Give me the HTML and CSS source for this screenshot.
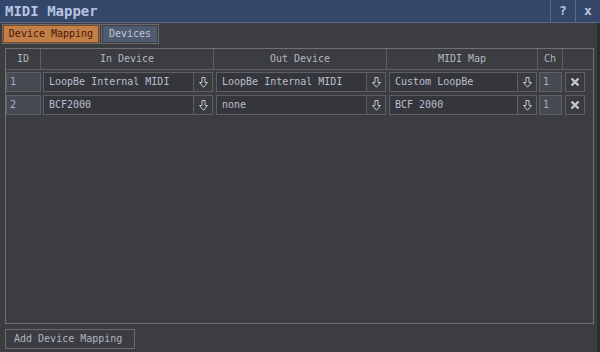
FILE: index.html
```html
<!DOCTYPE html>
<html>
<head>
<meta charset="utf-8">
<link rel="stylesheet" href="styles.css">
</head>
<body>
<div class="window">
  <div class="titlebar">
    <div class="title">MIDI Mapper</div>
    <div class="tbtn">?</div>
    <div class="tbtn">x</div>
  </div>
  <div class="tabs">
    <div class="tab active">Device Mapping</div>
    <div class="tab devices">Devices</div>
  </div>
  <div class="panel">
    <div class="grid head">
      <div class="hc">ID</div>
      <div class="hc">In Device</div>
      <div class="hc">Out Device</div>
      <div class="hc">MIDI Map</div>
      <div class="hc">Ch</div>
      <div class="hc last"></div>
    </div>
    <div class="grid row">
      <div class="cell"><div class="num">1</div></div>
      <div class="cell"><div class="combo"><div class="ctext">LoopBe Internal MIDI</div><div class="cbtn"><svg width="9" height="11" viewBox="0 0 9 11"><path d="M3 0.5H6V5.5H8.5L4.5 10.3L0.5 5.5H3Z" fill="none" stroke="#c3c6ce"/></svg></div></div></div>
      <div class="cell"><div class="combo"><div class="ctext">LoopBe Internal MIDI</div><div class="cbtn"><svg width="9" height="11" viewBox="0 0 9 11"><path d="M3 0.5H6V5.5H8.5L4.5 10.3L0.5 5.5H3Z" fill="none" stroke="#c3c6ce"/></svg></div></div></div>
      <div class="cell"><div class="combo"><div class="ctext">Custom LoopBe</div><div class="cbtn"><svg width="9" height="11" viewBox="0 0 9 11"><path d="M3 0.5H6V5.5H8.5L4.5 10.3L0.5 5.5H3Z" fill="none" stroke="#c3c6ce"/></svg></div></div></div>
      <div class="cell"><div class="num ch">1</div></div>
      <div class="cell xc"><div class="xbtn"><svg width="10" height="10" viewBox="0 0 10 10"><path d="M1.5 1.5L8.5 8.5M8.5 1.5L1.5 8.5" stroke="#c3c6ce" stroke-width="2.4"/></svg></div></div>
    </div>
    <div class="grid row">
      <div class="cell"><div class="num">2</div></div>
      <div class="cell"><div class="combo"><div class="ctext">BCF2000</div><div class="cbtn"><svg width="9" height="11" viewBox="0 0 9 11"><path d="M3 0.5H6V5.5H8.5L4.5 10.3L0.5 5.5H3Z" fill="none" stroke="#c3c6ce"/></svg></div></div></div>
      <div class="cell"><div class="combo"><div class="ctext">none</div><div class="cbtn"><svg width="9" height="11" viewBox="0 0 9 11"><path d="M3 0.5H6V5.5H8.5L4.5 10.3L0.5 5.5H3Z" fill="none" stroke="#c3c6ce"/></svg></div></div></div>
      <div class="cell"><div class="combo"><div class="ctext">BCF 2000</div><div class="cbtn"><svg width="9" height="11" viewBox="0 0 9 11"><path d="M3 0.5H6V5.5H8.5L4.5 10.3L0.5 5.5H3Z" fill="none" stroke="#c3c6ce"/></svg></div></div></div>
      <div class="cell"><div class="num ch">1</div></div>
      <div class="cell xc"><div class="xbtn"><svg width="10" height="10" viewBox="0 0 10 10"><path d="M1.5 1.5L8.5 8.5M8.5 1.5L1.5 8.5" stroke="#c3c6ce" stroke-width="2.4"/></svg></div></div>
    </div>
  </div>
  <div class="footer">
    <div class="addbtn">Add Device Mapping</div>
  </div>
</div>
</body>
</html>
```
FILE: styles.css
```css
html, body {
  margin: 0;
  padding: 0;
  background: #3c3d41;
}
.window {
  width: 600px;
  height: 352px;
  box-sizing: border-box;
  border-right: 3px solid #2c2d30;
  background: #3c3d41;
  font-family: "DejaVu Sans Mono", monospace;
  font-size: 10px;
  color: #b9bfcc;
  display: flex;
  flex-direction: column;
}
.titlebar {
  height: 22px;
  background: #34466a;
  border-bottom: 1px solid #5b6a8a;
  display: flex;
  align-items: stretch;
  margin-right: -3px;
}
.title {
  flex: 1;
  padding-left: 5px;
  font-weight: bold;
  font-size: 14px;
  line-height: 22px;
  color: #b8c4e4;
}
.tbtn {
  width: 24px;
  border-left: 1px solid #5b6a8a;
  text-align: center;
  font-weight: bold;
  font-size: 13px;
  line-height: 22px;
  color: #b8c4e4;
}
.tabs {
  display: flex;
  gap: 1px;
  padding: 1px 0 0 2px;
  height: 20px;
}
.tab {
  box-sizing: border-box;
  height: 20px;
  width: 58px;
  border: 1px solid #6c6c6c;
  text-align: center;
  line-height: 17px;
  background: #4f5b71;
  color: #c0c8da;
  box-shadow: inset 0 0 0 1px #3c3d41;
  font-size: 10px;
}
.tab.active {
  width: 98px;
  background: #c27f48;
  color: #4a1608;
  box-shadow: inset 0 0 0 1px #7b4a25;
}
.panel {
  margin: 4px 5px 0 5px;
  height: 276px;
  border: 1px solid #717171;
  box-sizing: border-box;
  width: 589px;
}
.grid {
  display: grid;
  grid-template-columns: 35px 173px 173px 151px 25px 30px;
}
.head {
  height: 20px;
  border-bottom: 1px solid #5e5f63;
}
.hc {
  border-right: 1px solid #5e5f63;
  text-align: center;
  line-height: 19px;
  color: #b1b6c2;
}
.hc.last { border-right: none; }
.row {
  height: 20px;
  margin-top: 2px;
}
.row + .row { margin-top: 3px; }
.cell {
  padding: 0 1px 0 2px;
  display: flex;
}
.cell:first-child { padding: 0; }
.num {
  flex: 1;
  box-sizing: border-box;
  border: 1px solid #5f6066;
  background: #464a53;
  padding-left: 3px;
  line-height: 18px;
  color: #aab0bc;
}
.ch { flex: none; width: 23px; margin-left: -1px; }
.combo {
  flex: 1;
  display: flex;
}
.ctext {
  flex: 1;
  box-sizing: border-box;
  border: 1px solid #5f6066;
  background: #34363c;
  padding-left: 5px;
  line-height: 18px;
  color: #b9bfcc;
}
.cbtn {
  width: 19px;
  box-sizing: border-box;
  border: 1px solid #5f6066;
  border-left: none;
  background: #393b41;
  display: flex;
  align-items: center;
  justify-content: center;
}
.xc { padding-left: 2px; }
.xbtn {
  width: 20px;
  box-sizing: border-box;
  border: 1px solid #5f6066;
  background: #393b41;
  display: flex;
  align-items: center;
  justify-content: center;
}
.footer {
  padding: 5px 0 0 5px;
}
.addbtn {
  display: inline-block;
  box-sizing: border-box;
  height: 20px;
  width: 130px;
  border: 1px solid #6a6b70;
  padding-left: 8px;
  line-height: 18px;
  color: #aeb4c2;
}
```
